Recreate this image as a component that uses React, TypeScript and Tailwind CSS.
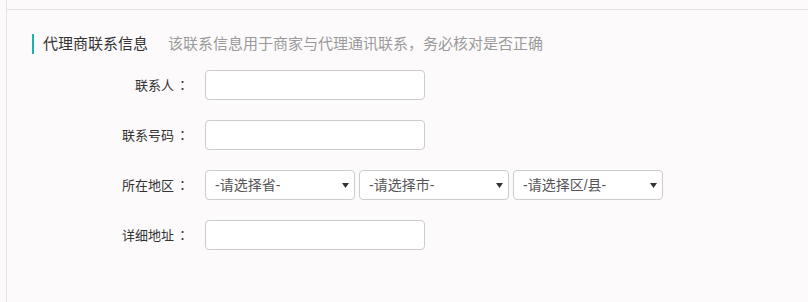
const font = "font-['Liberation_Sans','Noto_Sans_CJK_SC',sans-serif]";

function Arrow() {
  return (
    <svg width="7" height="5" viewBox="0 0 7 5" className="shrink-0">
      <path d="M0 0 H7 L3.5 5 Z" fill="#333" />
    </svg>
  );
}

function TextInput() {
  return <div className="w-[220px] h-[30px] bg-white border border-[#cccccc] rounded-[4px]" />;
}

function Select({ text }: { text: string }) {
  return (
    <div className="w-[150px] h-[30px] bg-white border border-[#cccccc] rounded-[4px] flex items-center justify-between pl-[9px] pr-[5px] text-[14px] text-[#555]">
      <span>{text}</span>
      <Arrow />
    </div>
  );
}

function Row({ label, children }: { label: string; children: React.ReactNode }) {
  return (
    <div className="flex items-center h-[30px] mb-[20px]">
      <div className="w-[182px] text-right text-[13px] text-[#333]">
        {label}
        <span className="ml-[2px] font-['Noto_Sans_CJK_TC',sans-serif]">：</span>
      </div>
      <div className="ml-[16px] flex gap-[4px]">{children}</div>
    </div>
  );
}

export default function App() {
  return (
    <div className={`w-[808px] h-[302px] bg-[#fcfafb] overflow-hidden ${font}`}>
      <div className="ml-[6px] h-full border-l border-[#e6e4e5]">
        <div className="h-[10px] border-b border-[#e3e1e2]" />
        <div className="pt-[24px] pl-[25px]">
          <div className="flex items-center h-[20px] border-l-2 border-[#1bb3a6] pl-[9px] text-[15px]">
            <span className="text-[#333]">代理商联系信息</span>
            <span className="ml-[20px] text-[#9a9a9a]">该联系信息用于商家与代理通讯联系，务必核对是否正确</span>
          </div>
        </div>
        <div className="mt-[16px]">
          <Row label="联系人">
            <TextInput />
          </Row>
          <Row label="联系号码">
            <TextInput />
          </Row>
          <Row label="所在地区">
            <Select text="-请选择省-" />
            <Select text="-请选择市-" />
            <Select text="-请选择区/县-" />
          </Row>
          <Row label="详细地址">
            <TextInput />
          </Row>
        </div>
      </div>
    </div>
  );
}
